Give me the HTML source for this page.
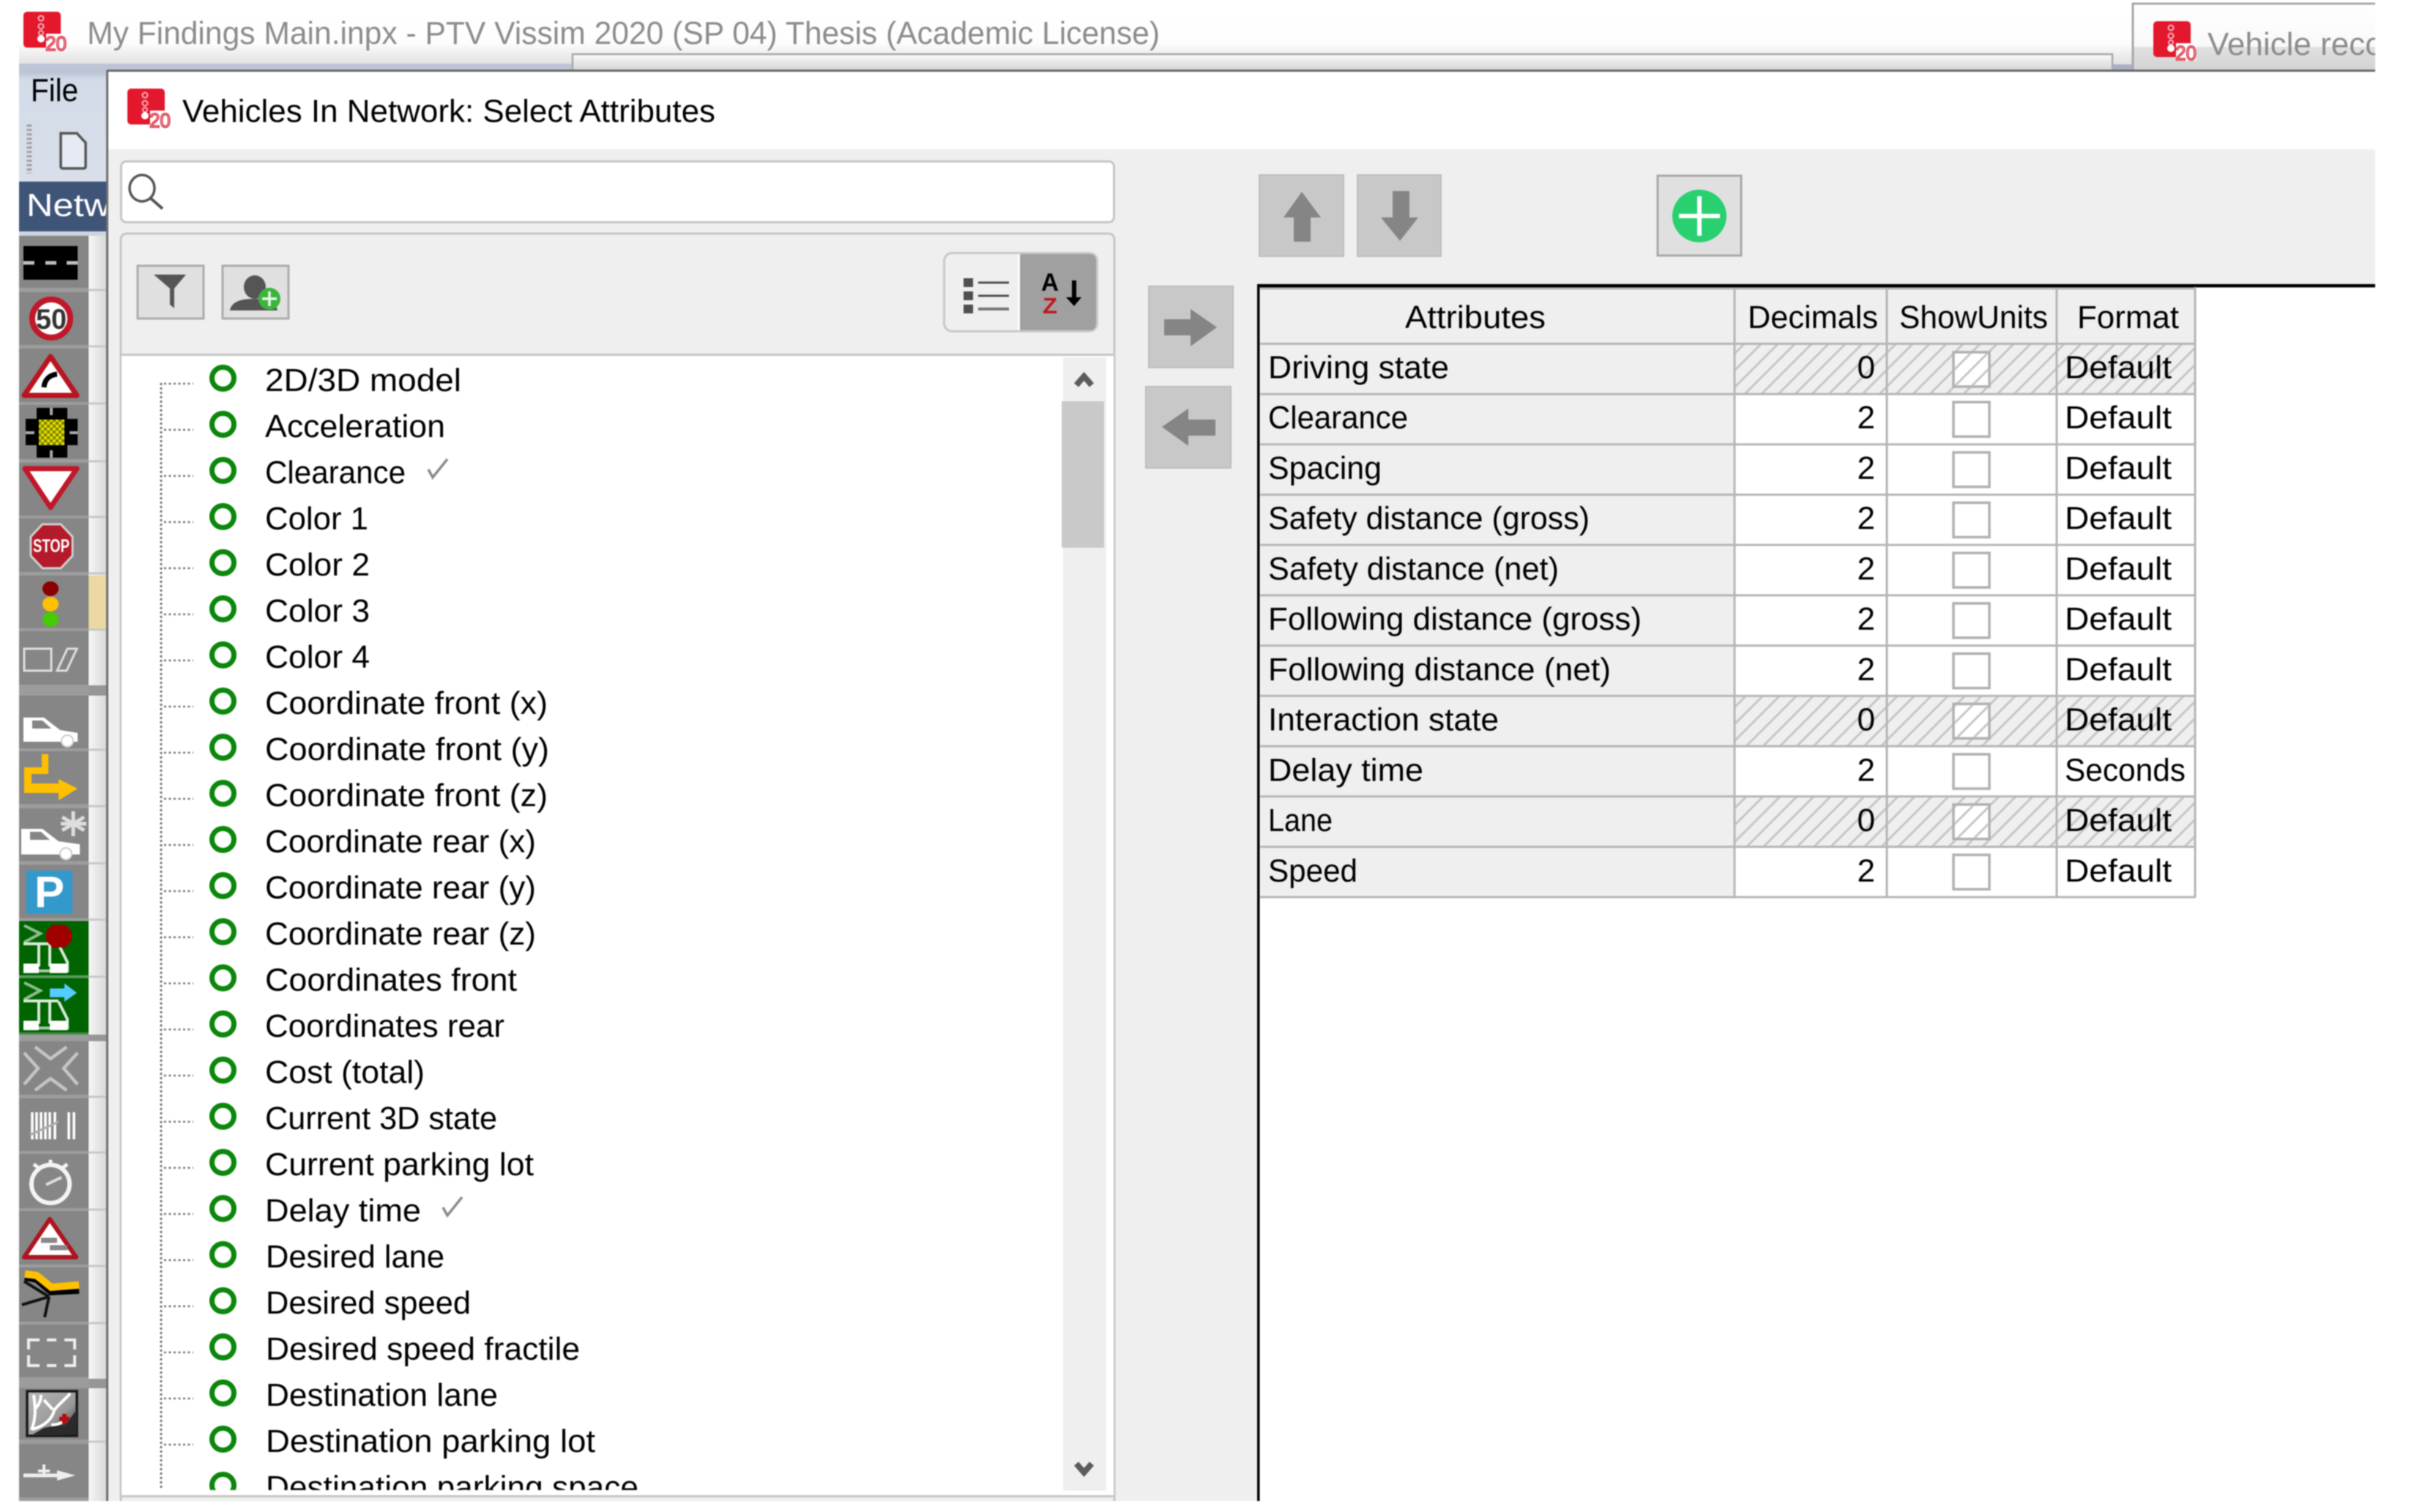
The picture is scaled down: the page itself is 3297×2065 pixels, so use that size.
<!DOCTYPE html>
<html><head><meta charset="utf-8"><title>Vehicles In Network: Select Attributes</title>
<style>
html,body{margin:0;padding:0;background:#fff;width:3297px;height:2065px;overflow:hidden}
svg{display:block;filter:blur(.7px)}
text{font-family:"Liberation Sans",sans-serif;font-size:44px;fill:#000}
.g{fill:#8c8c8c}
</style></head><body>
<svg xmlns="http://www.w3.org/2000/svg" width="3297" height="2065" viewBox="0 0 3297 2065">
<defs>
<linearGradient id="tb" x1="0" y1="0" x2="0" y2="1"><stop offset="0" stop-color="#fff"/><stop offset=".6" stop-color="#fdfdfd"/><stop offset="1" stop-color="#d8d8d8"/></linearGradient>
<linearGradient id="tab" x1="0" y1="0" x2="0" y2="1"><stop offset="0" stop-color="#fbfbfb"/><stop offset="1" stop-color="#d2d2d2"/></linearGradient>
<linearGradient id="col" x1="0" y1="0" x2="1" y2="0"><stop offset="0" stop-color="#f6f6f6"/><stop offset="1" stop-color="#d8d8d8"/></linearGradient>
<linearGradient id="menu" x1="0" y1="0" x2="0" y2="1"><stop offset="0" stop-color="#b9c1d3"/><stop offset=".08" stop-color="#d3dbe8"/><stop offset="1" stop-color="#d8dfea"/></linearGradient>
<linearGradient id="map" x1="0" y1="0" x2="1" y2="1"><stop offset="0" stop-color="#b8b8b8"/><stop offset=".6" stop-color="#999"/><stop offset="1" stop-color="#2a2a2a"/></linearGradient>
<pattern id="h" patternUnits="userSpaceOnUse" width="23" height="23"><path d="M-5 5L5-5M0 23L23 0M18 28L28 18" stroke="#c6c6c6" stroke-width="3" fill="none"/></pattern>
<pattern id="chk" patternUnits="userSpaceOnUse" width="8" height="8"><rect width="8" height="8" fill="#7f7f00"/><rect width="4" height="4" fill="#e0e000"/><rect x="4" y="4" width="4" height="4" fill="#e0e000"/></pattern>
<clipPath id="listclip"><rect x="166" y="485" width="1286" height="1550"/></clipPath>
<clipPath id="netclip"><rect x="26" y="248" width="120" height="68"/></clipPath>
<clipPath id="tabclip"><rect x="2912" y="0" width="332" height="97"/></clipPath>
</defs>
<rect width="3297" height="2065" fill="#fff"/>

<!-- top title bar -->
<rect x="26" y="0" width="3218" height="97" fill="url(#tb)"/>
<rect x="26" y="87" width="760" height="10" fill="#bcc4d6"/>
<rect x="782" y="74" width="2103" height="23" fill="url(#tab)" stroke="#a8a8a8" stroke-width="2.5"/>
<rect x="146" y="95" width="2740" height="3" fill="#6a6a6a"/>
<rect x="2885" y="88" width="27" height="9" fill="#a8b0c4"/>
<rect x="2912" y="4" width="332" height="92" fill="url(#tab)"/>
<rect x="2912" y="4" width="332" height="60" fill="#fff" opacity=".8"/>
<path d="M2913 97V5H3244" fill="none" stroke="#a8a8a8" stroke-width="3"/>
<rect x="2912" y="95" width="332" height="3" fill="#9a9a9a"/>

<!-- logo title -->
<g>
<rect x="32" y="16" width="51" height="49" rx="5" fill="#e3182d"/>
<circle cx="56" cy="25" r="3.5" fill="none" stroke="#f5b0b8" stroke-width="2"/><circle cx="56" cy="36" r="3.5" fill="none" stroke="#f5b0b8" stroke-width="2"/><circle cx="56" cy="45" r="3" fill="none" stroke="#f5b0b8" stroke-width="2"/><circle cx="56" cy="53" r="5" fill="#fff"/>
<rect x="63" y="46" width="28" height="24" fill="#fff"/>
<text x="62" y="69" textLength="29" lengthAdjust="spacingAndGlyphs" style="font-size:28px;fill:#f6d0d4;stroke:#d83040;stroke-width:1.5px">20</text>
</g>
<text x="119" y="60" textLength="1465" lengthAdjust="spacingAndGlyphs" class="g">My Findings Main.inpx - PTV Vissim 2020 (SP 04) Thesis (Academic License)</text>
<g transform="translate(2909,13)">
<rect x="32" y="16" width="51" height="49" rx="5" fill="#e3182d"/>
<circle cx="56" cy="25" r="3.5" fill="none" stroke="#f5b0b8" stroke-width="2"/><circle cx="56" cy="36" r="3.5" fill="none" stroke="#f5b0b8" stroke-width="2"/><circle cx="56" cy="45" r="3" fill="none" stroke="#f5b0b8" stroke-width="2"/><circle cx="56" cy="53" r="5" fill="#fff"/>
<rect x="63" y="46" width="28" height="24" fill="#fff"/>
<text x="62" y="69" textLength="29" lengthAdjust="spacingAndGlyphs" style="font-size:28px;fill:#f6d0d4;stroke:#d83040;stroke-width:1.5px">20</text>
</g>
<g clip-path="url(#tabclip)"><text x="3015" y="75" class="g">Vehicle records</text></g>

<!-- left app strip -->
<rect x="26" y="97" width="120" height="151" fill="url(#menu)"/>
<text x="42" y="138" textLength="65" lengthAdjust="spacingAndGlyphs">File</text>
<path d="M40 170V237" stroke="#a0a0a0" stroke-width="7" stroke-dasharray="3 3"/>
<path d="M83 182h22l12 13v32q0 3-3 3H86q-3 0-3-3z" fill="#e6ebf3" stroke="#555" stroke-width="3.5"/>
<rect x="26" y="248" width="120" height="68" fill="#3f5578"/>
<g clip-path="url(#netclip)"><text x="36" y="295" textLength="185" lengthAdjust="spacingAndGlyphs" style="fill:#fff">Network</text></g>
<rect x="26" y="316" width="120" height="6" fill="#cdd4e2"/>

<rect x="26" y="322" width="95" height="1728" fill="#9c9c9c"/>
<rect x="121" y="322" width="25" height="1728" fill="url(#col)"/>
<rect x="145" y="96" width="3" height="1954" fill="#6f6f6f"/>
<rect x="121" y="786" width="24" height="73" fill="#ecd8a2"/>
<path d="M121 396H145M121 473H145M121 551H145M121 630H145M121 706H145M121 783H145M121 860H145M121 1024H145M121 1101H145M121 1179H145M121 1256H145M121 1334H145M121 1498H145M121 1574H145M121 1652H145M121 1729H145M121 1807H145M121 1969H145" stroke="#c8c8c8" stroke-width="3"/>
<path d="M121 936H145V950H121zM121 1413H145V1422H121zM121 1883H145V1896H121z" fill="#969696"/>
<g fill="#868686">
<rect x="26" y="322" width="95" height="71"/><rect x="26" y="399" width="95" height="72"/><rect x="26" y="476" width="95" height="73"/><rect x="26" y="553" width="95" height="74"/><rect x="26" y="632" width="95" height="72"/><rect x="26" y="708" width="95" height="73"/><rect x="26" y="786" width="95" height="72"/><rect x="26" y="862" width="95" height="73"/><rect x="26" y="950" width="95" height="72"/><rect x="26" y="1026" width="95" height="72"/><rect x="26" y="1104" width="95" height="72"/><rect x="26" y="1181" width="95" height="73"/><rect x="26" y="1422" width="95" height="73"/><rect x="26" y="1500" width="95" height="72"/><rect x="26" y="1576" width="95" height="74"/><rect x="26" y="1654" width="95" height="73"/><rect x="26" y="1731" width="95" height="74"/><rect x="26" y="1809" width="95" height="72"/><rect x="26" y="1896" width="95" height="70"/><rect x="26" y="1972" width="95" height="73"/>
</g>
<rect x="26" y="1258" width="95" height="74" fill="#006400"/><rect x="26" y="1336" width="95" height="74" fill="#006400"/>
<rect x="26" y="1332" width="95" height="4" fill="#5a9a5a"/><rect x="26" y="1410" width="95" height="3" fill="#4a8a4a"/>

<!-- road -->
<rect x="32" y="336" width="74" height="46" fill="#000"/>
<path d="M32 359H47M62 359H77M91 359H106" stroke="#bdbdbd" stroke-width="5"/>
<!-- 50 -->
<circle cx="70" cy="435" r="26" fill="#fff" stroke="#c0182a" stroke-width="8"/>
<text x="70" y="449" text-anchor="middle" textLength="42" lengthAdjust="spacingAndGlyphs" style="font-size:39px;font-weight:bold;fill:#333">50</text>
<!-- curve -->
<path d="M69 487L105 540H33z" fill="#fff" stroke="#b81520" stroke-width="7" stroke-linejoin="round"/>
<path d="M60 529C61 518 68 512 78 511" fill="none" stroke="#000" stroke-width="7"/>
<!-- 4 -->
<path d="M50 557H92V572H106V608H92V625H50V608H35V572H50z" fill="#000"/>
<rect x="53" y="573" width="35" height="35" fill="url(#chk)"/>
<path d="M70 557V567M70 615V625M35 591H47M95 591H106" stroke="#aaa" stroke-width="4"/>
<!-- yield -->
<path d="M34 640H105L69 693z" fill="#fff" stroke="#c0182a" stroke-width="7" stroke-linejoin="round"/>
<!-- stop -->
<path d="M58 716H83L99 733V759L83 776H58L42 759V733z" fill="#b51a2a" stroke="#cfcfcf" stroke-width="3"/>
<text x="70" y="754" text-anchor="middle" textLength="50" lengthAdjust="spacingAndGlyphs" style="font-size:25px;font-weight:bold;fill:#fff">STOP</text>
<!-- signal -->
<ellipse cx="69" cy="804" rx="11" ry="10" fill="#8b0000"/><ellipse cx="69" cy="825" rx="11" ry="10" fill="#ffc000"/><ellipse cx="69" cy="846" rx="11" ry="10" fill="#44cc00"/>
<!-- rect/para -->
<rect x="33" y="886" width="37" height="30" fill="none" stroke="#ddd" stroke-width="3"/>
<path d="M92 886H105L91 916H78z" fill="none" stroke="#ddd" stroke-width="3"/>
<!-- car -->
<path d="M32 980H60L82 997L106 1001V1013H32z" fill="#fff"/>
<path d="M44 984H58L70 995H44z" fill="#868686"/>
<circle cx="92" cy="1012" r="8" fill="#fff" stroke="#ccc" stroke-width="2"/>
<!-- yellow route -->
<path d="M57 1030H66V1057H43V1070H80V1064L106 1077L80 1093V1083H33V1048H57z" fill="#ffc000"/>
<!-- car star -->
<path d="M29 1132H58L80 1149L109 1153V1167H29z" fill="#fff"/>
<path d="M41 1136H56L68 1147H41z" fill="#868686"/>
<circle cx="90" cy="1166" r="8" fill="#fff" stroke="#ccc" stroke-width="2"/>
<path d="M100 1108V1142M85 1116L115 1134M115 1116L85 1134M83 1125H118" stroke="#ddd" stroke-width="5"/>
<!-- P -->
<rect x="36" y="1189" width="63" height="59" fill="#3399cc"/>
<text x="47" y="1239" textLength="41" lengthAdjust="spacingAndGlyphs" style="font-size:60px;font-weight:bold;fill:#fff">P</text>
<!-- green tiles -->
<g>
<path d="M33 1264L55 1275L33 1287" fill="none" stroke="#8fbc8f" stroke-width="4"/>
<path d="M32 1289H80M53 1290V1320M68 1290V1320M80 1290L92 1314V1328" fill="none" stroke="#d8e8d8" stroke-width="4"/>
<rect x="32" y="1316" width="21" height="13" fill="#fff"/><rect x="68" y="1316" width="24" height="13" fill="#fff"/><rect x="53" y="1324" width="15" height="4" fill="#a8c8a8"/>
</g>
<path d="M72 1263H89L98 1272V1285L89 1294H72L63 1285V1272z" fill="#a00000"/>
<g>
<path d="M33 1342L55 1353L33 1365" fill="none" stroke="#8fbc8f" stroke-width="4"/>
<path d="M32 1367H80M53 1368V1398M68 1368V1398M80 1368L92 1392V1406" fill="none" stroke="#d8e8d8" stroke-width="4"/>
<rect x="32" y="1394" width="21" height="13" fill="#fff"/><rect x="68" y="1394" width="24" height="13" fill="#fff"/><rect x="53" y="1402" width="15" height="4" fill="#a8c8a8"/>
</g>
<path d="M68 1350H88V1343L105 1356L88 1368V1362H68z" fill="#55ccff"/>
<!-- X -->
<path d="M48 1430L69 1446L91 1430M48 1489L69 1473L91 1489M33 1438L52 1459L33 1481M106 1438L87 1459L106 1481" fill="none" stroke="#c4c4c4" stroke-width="4.500"/>
<!-- bars -->
<path d="M44 1519V1556M50 1519V1556M56 1519V1556M62 1519V1556M68 1519V1556M75 1519V1556M94 1519V1556M101 1519V1556" stroke="#fff" stroke-width="3.500"/>
<path d="M41 1550L80 1532" stroke="#aaa" stroke-width="3"/>
<!-- stopwatch -->
<circle cx="69" cy="1617" r="26" fill="none" stroke="#f4f4f4" stroke-width="6"/>
<path d="M69 1584V1592M46 1590L54 1596M92 1590L84 1596" stroke="#f4f4f4" stroke-width="5"/>
<path d="M63 1618L84 1608" stroke="#ddd" stroke-width="4"/>
<!-- triangle 2 -->
<path d="M68 1665L104 1717H33z" fill="#fff" stroke="#ad1420" stroke-width="6" stroke-linejoin="round"/>
<path d="M56 1694H78M68 1704H92" stroke="#888" stroke-width="7"/>
<!-- junction -->
<path d="M34 1744L50 1747L70 1764L108 1762" fill="none" stroke="#000" stroke-width="10"/>
<path d="M34 1740L50 1742L70 1758L108 1755" fill="none" stroke="#ffc000" stroke-width="10"/>
<path d="M30 1782L67 1771M67 1771L61 1799M33 1750L67 1771" fill="none" stroke="#111" stroke-width="4"/>
<!-- dashed rect -->
<path d="M54 1830H39V1843M39 1851V1865H54M64 1830H77M64 1865H77M88 1830H102V1843M102 1851V1865H88" fill="none" stroke="#eee" stroke-width="4"/>
<!-- map -->
<rect x="37" y="1900" width="68" height="61" fill="url(#map)" stroke="#1a1a1a" stroke-width="3.500"/>
<path d="M105 1902V1925L90 1945L60 1950L45 1959H105z" fill="#2a2a2a"/>
<path d="M43 1953C50 1935 48 1920 46 1905M44 1952C62 1948 72 1936 74 1926C80 1918 88 1912 96 1903M60 1912L72 1925M70 1946C78 1946 84 1944 90 1938M56 1905C56 1914 52 1920 48 1924" fill="none" stroke="#fff" stroke-width="4"/>
<path d="M88 1931V1945M81 1938H95" stroke="#b01010" stroke-width="6"/>
<!-- arrow -->
<path d="M32 2015H80" stroke="#eee" stroke-width="5"/><path d="M78 2008L103 2015L78 2022z" fill="#eee"/><path d="M60 2000V2015M52 2009H68" stroke="#eee" stroke-width="4"/>

<!-- dialog -->
<rect x="148" y="98" width="3096" height="106" fill="#fff"/>
<rect x="146" y="95" width="3098" height="3" fill="#6a6a6a"/>
<rect x="148" y="204" width="3096" height="1846" fill="#efefef"/>
<g transform="translate(142,105)">
<rect x="32" y="16" width="51" height="49" rx="5" fill="#e3182d"/>
<circle cx="56" cy="25" r="3.500" fill="none" stroke="#f5b0b8" stroke-width="2"/><circle cx="56" cy="36" r="3.500" fill="none" stroke="#f5b0b8" stroke-width="2"/><circle cx="56" cy="45" r="3" fill="none" stroke="#f5b0b8" stroke-width="2"/><circle cx="56" cy="53" r="5" fill="#fff"/>
<rect x="63" y="46" width="28" height="24" fill="#fff"/>
<text x="62" y="69" textLength="29" lengthAdjust="spacingAndGlyphs" style="font-size:28px;fill:#f6d0d4;stroke:#d83040;stroke-width:1.5px">20</text>
</g>
<text x="249" y="166.500" textLength="728" lengthAdjust="spacingAndGlyphs">Vehicles In Network: Select Attributes</text>

<!-- search -->
<rect x="165.500" y="220.500" width="1356" height="83" rx="7" fill="#fff" stroke="#c6c6c6" stroke-width="3"/>
<ellipse cx="194" cy="257" rx="17" ry="18" fill="none" stroke="#555" stroke-width="3.500"/>
<path d="M206 271L222 285" stroke="#555" stroke-width="4"/>

<!-- list panel -->
<path d="M165 2050V328q0-9 9-9H1513q9 0 9 9V2050" fill="#efefef" stroke="#c6c6c6" stroke-width="3"/>
<rect x="166" y="483" width="1355" height="3" fill="#c6c6c6"/>
<rect x="166" y="486" width="1355" height="1556" fill="#fff"/>
<rect x="164" y="2042" width="1358" height="3" fill="#c6c6c6"/>

<!-- tool buttons -->
<rect x="188" y="363" width="90" height="72" fill="#e0e0e0" stroke="#ababab" stroke-width="3"/>
<path d="M210 375H254L238 394V421L232 416V394z" fill="#555"/>
<rect x="304" y="363" width="90" height="72" fill="#e0e0e0" stroke="#ababab" stroke-width="3"/>
<ellipse cx="348" cy="392" rx="15" ry="16" fill="#555"/>
<path d="M314 424C316 412 329 408 348 408C367 408 377 414 379 424z" fill="#555"/>
<circle cx="368" cy="408" r="15" fill="#3cb53c"/>
<path d="M368 398V418M358 408H378" stroke="#e8f8e8" stroke-width="3.500"/>

<!-- view buttons -->
<rect x="1289.500" y="345.500" width="209" height="107" rx="11" fill="#efefef" stroke="#c8c8c8" stroke-width="3"/>
<path d="M1393 347H1488q9 0 9 9V442q0 9-9 9H1393z" fill="#a0a0a0"/>
<rect x="1390" y="347" width="3" height="104" fill="#fff"/>
<g fill="#4f4f4f"><rect x="1316" y="380" width="13" height="12"/><rect x="1316" y="398" width="13" height="12"/><rect x="1316" y="416" width="13" height="12"/></g>
<path d="M1336 386H1378M1336 404H1378" stroke="#4f4f4f" stroke-width="3"/><path d="M1336 422H1378" stroke="#777" stroke-width="4"/>
<text x="1422" y="397" textLength="24" lengthAdjust="spacingAndGlyphs" style="font-size:34px;font-weight:bold;fill:#000">A</text>
<text x="1424" y="428" textLength="20" lengthAdjust="spacingAndGlyphs" style="font-size:31px;font-weight:bold;fill:#c01822">Z</text>
<path d="M1464 383H1470V406H1477L1467 418L1456 406H1464z" fill="#000"/>

<!-- scrollbar -->
<rect x="1452" y="488" width="59" height="1548" fill="#efefef"/>
<rect x="1450" y="548" width="58" height="200" fill="#c9c9c9"/>
<path d="M1470 526L1480.500 514L1491 526" fill="none" stroke="#5c5c5c" stroke-width="8"/>
<path d="M1470 1999L1480.500 2011L1491 1999" fill="none" stroke="#5c5c5c" stroke-width="8"/>

<!-- tree -->
<g clip-path="url(#listclip)">
<path d="M220 523V2032" stroke="#777" stroke-width="3" stroke-dasharray="3 3"/>
<path d="M224 524H264M224 587H264M224 650H264M224 713H264M224 776H264M224 839H264M224 902H264M224 965H264M224 1028H264M224 1091H264M224 1154H264M224 1217H264M224 1280H264M224 1343H264M224 1406H264M224 1469H264M224 1532H264M224 1595H264M224 1658H264M224 1721H264M224 1784H264M224 1847H264M224 1910H264M224 1973H264" stroke="#777" stroke-width="2.500" stroke-dasharray="3 3.500"/>
<g fill="none" stroke="#0b870b" stroke-width="7">
<ellipse cx="304.500" cy="516.500" rx="15" ry="15"/><ellipse cx="304.500" cy="579.500" rx="15" ry="15"/><ellipse cx="304.500" cy="642.500" rx="15" ry="15"/><ellipse cx="304.500" cy="705.500" rx="15" ry="15"/><ellipse cx="304.500" cy="768.500" rx="15" ry="15"/><ellipse cx="304.500" cy="831.500" rx="15" ry="15"/><ellipse cx="304.500" cy="894.500" rx="15" ry="15"/><ellipse cx="304.500" cy="957.500" rx="15" ry="15"/><ellipse cx="304.500" cy="1020.500" rx="15" ry="15"/><ellipse cx="304.500" cy="1083.500" rx="15" ry="15"/><ellipse cx="304.500" cy="1146.500" rx="15" ry="15"/><ellipse cx="304.500" cy="1209.500" rx="15" ry="15"/><ellipse cx="304.500" cy="1272.500" rx="15" ry="15"/><ellipse cx="304.500" cy="1335.500" rx="15" ry="15"/><ellipse cx="304.500" cy="1398.500" rx="15" ry="15"/><ellipse cx="304.500" cy="1461.500" rx="15" ry="15"/><ellipse cx="304.500" cy="1524.500" rx="15" ry="15"/><ellipse cx="304.500" cy="1587.500" rx="15" ry="15"/><ellipse cx="304.500" cy="1650.500" rx="15" ry="15"/><ellipse cx="304.500" cy="1713.500" rx="15" ry="15"/><ellipse cx="304.500" cy="1776.500" rx="15" ry="15"/><ellipse cx="304.500" cy="1839.500" rx="15" ry="15"/><ellipse cx="304.500" cy="1902.500" rx="15" ry="15"/><ellipse cx="304.500" cy="1965.500" rx="15" ry="15"/><ellipse cx="304.500" cy="2028.500" rx="15" ry="15"/>
</g>
<text x="362" y="534" textLength="268" lengthAdjust="spacingAndGlyphs">2D/3D model</text>
<text x="362" y="597" textLength="246" lengthAdjust="spacingAndGlyphs">Acceleration</text>
<text x="362" y="660" textLength="192" lengthAdjust="spacingAndGlyphs">Clearance</text>
<text x="362" y="723" textLength="141" lengthAdjust="spacingAndGlyphs">Color 1</text>
<text x="362" y="786" textLength="143" lengthAdjust="spacingAndGlyphs">Color 2</text>
<text x="362" y="849" textLength="143" lengthAdjust="spacingAndGlyphs">Color 3</text>
<text x="362" y="912" textLength="143" lengthAdjust="spacingAndGlyphs">Color 4</text>
<text x="362" y="975" textLength="386" lengthAdjust="spacingAndGlyphs">Coordinate front (x)</text>
<text x="362" y="1038" textLength="388" lengthAdjust="spacingAndGlyphs">Coordinate front (y)</text>
<text x="362" y="1101" textLength="386" lengthAdjust="spacingAndGlyphs">Coordinate front (z)</text>
<text x="362" y="1164" textLength="370" lengthAdjust="spacingAndGlyphs">Coordinate rear (x)</text>
<text x="362" y="1227" textLength="370" lengthAdjust="spacingAndGlyphs">Coordinate rear (y)</text>
<text x="362" y="1290" textLength="370" lengthAdjust="spacingAndGlyphs">Coordinate rear (z)</text>
<text x="362" y="1353" textLength="344" lengthAdjust="spacingAndGlyphs">Coordinates front</text>
<text x="362" y="1416" textLength="327" lengthAdjust="spacingAndGlyphs">Coordinates rear</text>
<text x="362" y="1479" textLength="218" lengthAdjust="spacingAndGlyphs">Cost (total)</text>
<text x="362" y="1542" textLength="317" lengthAdjust="spacingAndGlyphs">Current 3D state</text>
<text x="362" y="1605" textLength="367" lengthAdjust="spacingAndGlyphs">Current parking lot</text>
<text x="362" y="1668" textLength="213" lengthAdjust="spacingAndGlyphs">Delay time</text>
<text x="363" y="1731" textLength="244" lengthAdjust="spacingAndGlyphs">Desired lane</text>
<text x="363" y="1794" textLength="280" lengthAdjust="spacingAndGlyphs">Desired speed</text>
<text x="363" y="1857" textLength="429" lengthAdjust="spacingAndGlyphs">Desired speed fractile</text>
<text x="363" y="1920" textLength="317" lengthAdjust="spacingAndGlyphs">Destination lane</text>
<text x="363" y="1983" textLength="450" lengthAdjust="spacingAndGlyphs">Destination parking lot</text>
<text x="363" y="2046" textLength="509" lengthAdjust="spacingAndGlyphs">Destination parking space</text>
</g>
<path d="M585 641L591 652L611 627" fill="none" stroke="#8b8b8b" stroke-width="3.500"/>
<path d="M605 1649L611 1660L631 1635" fill="none" stroke="#8b8b8b" stroke-width="3.500"/>

<!-- action buttons -->
<rect x="1720" y="239" width="115" height="111" fill="#c8c8c8" stroke="#bdbdbd" stroke-width="2"/>
<path d="M1778 262L1804 297H1790V330H1767V297H1753z" fill="#858585"/>
<rect x="1854" y="239" width="114" height="111" fill="#c8c8c8" stroke="#bdbdbd" stroke-width="2"/>
<path d="M1902 261H1925V297H1937L1912 329L1886 297H1902z" fill="#858585"/>
<rect x="2264" y="240" width="114" height="109" fill="#e0e0e0" stroke="#a8a8a8" stroke-width="3"/>
<ellipse cx="2321" cy="295" rx="37" ry="36" fill="#28d070"/>
<path d="M2293 295H2349M2321 268V322" stroke="#fff" stroke-width="6"/>
<rect x="1569" y="391" width="115" height="111" fill="#c8c8c8" stroke="#bdbdbd" stroke-width="2"/>
<path d="M1590 436H1626V422L1662 447L1626 473V458H1590z" fill="#858585"/>
<rect x="1565" y="528" width="116" height="111" fill="#c8c8c8" stroke="#bdbdbd" stroke-width="2"/>
<path d="M1587 583L1623 558V573H1660V595H1623V609z" fill="#858585"/>

<!-- table panel -->
<rect x="1719" y="390" width="1525" height="1660" fill="#fff"/>
<rect x="1717" y="388" width="1527" height="4.500" fill="#000"/>
<rect x="1717" y="388" width="3.500" height="1662" fill="#000"/>
<rect x="1721" y="393" width="1277" height="76" fill="#efefef"/>
<rect x="1721" y="469" width="648" height="757" fill="#efefef"/>

<!-- hatched cells -->
<rect x="2369" y="470" width="629" height="68" fill="#efefef"/><rect x="2369" y="470" width="629" height="68" fill="url(#h)"/>
<rect x="2369" y="950.400" width="629" height="69" fill="#efefef"/><rect x="2369" y="950.400" width="629" height="69" fill="url(#h)"/>
<rect x="2369" y="1087.800" width="629" height="69" fill="#efefef"/><rect x="2369" y="1087.800" width="629" height="69" fill="url(#h)"/>

<!-- grid -->
<path d="M1721 469.500H2998M1721 538.200H2998M1721 606.900H2998M1721 675.600H2998M1721 744.300H2998M1721 813H2998M1721 881.700H2998M1721 950.400H2998M1721 1019.100H2998M1721 1087.800H2998M1721 1156.500H2998M1721 1225.200H2998M1721 394H2998" stroke="#b6b6b6" stroke-width="3"/>
<path d="M2369 395V1226M2577 395V1226M2809 395V1226M2998 392V1226" stroke="#b6b6b6" stroke-width="3"/>

<!-- checkboxes -->
<g fill="#fff" stroke="#b0b0b0" stroke-width="3.500">
<rect x="2668" y="481" width="49" height="47"/><rect x="2668" y="549.200" width="49" height="47"/><rect x="2668" y="617.900" width="49" height="47"/><rect x="2668" y="686.600" width="49" height="47"/><rect x="2668" y="755.300" width="49" height="47"/><rect x="2668" y="824" width="49" height="47"/><rect x="2668" y="892.700" width="49" height="47"/><rect x="2668" y="961.400" width="49" height="47"/><rect x="2668" y="1030.100" width="49" height="47"/><rect x="2668" y="1098.800" width="49" height="47"/><rect x="2668" y="1167.500" width="49" height="47"/>
</g>
<rect x="2670" y="483" width="45" height="43" fill="url(#h)"/><rect x="2670" y="963.400" width="45" height="43" fill="url(#h)"/><rect x="2670" y="1100.800" width="45" height="43" fill="url(#h)"/>

<!-- table text -->
<text x="1919" y="448" textLength="192" lengthAdjust="spacingAndGlyphs">Attributes</text>
<text x="2387" y="448" textLength="178" lengthAdjust="spacingAndGlyphs">Decimals</text>
<text x="2594" y="448" textLength="203" lengthAdjust="spacingAndGlyphs">ShowUnits</text>
<text x="2837" y="448" textLength="139" lengthAdjust="spacingAndGlyphs">Format</text>

<text x="1732" y="516.500" textLength="247" lengthAdjust="spacingAndGlyphs">Driving state</text>
<text x="1732" y="585.200" textLength="191" lengthAdjust="spacingAndGlyphs">Clearance</text>
<text x="1732" y="654" textLength="155" lengthAdjust="spacingAndGlyphs">Spacing</text>
<text x="1732" y="722.700" textLength="439" lengthAdjust="spacingAndGlyphs">Safety distance (gross)</text>
<text x="1732" y="791.500" textLength="397" lengthAdjust="spacingAndGlyphs">Safety distance (net)</text>
<text x="1732" y="860.200" textLength="510" lengthAdjust="spacingAndGlyphs">Following distance (gross)</text>
<text x="1732" y="929" textLength="468" lengthAdjust="spacingAndGlyphs">Following distance (net)</text>
<text x="1732" y="997.700" textLength="315" lengthAdjust="spacingAndGlyphs">Interaction state</text>
<text x="1732" y="1066.500" textLength="212" lengthAdjust="spacingAndGlyphs">Delay time</text>
<text x="1732" y="1135.200" textLength="88" lengthAdjust="spacingAndGlyphs">Lane</text>
<text x="1732" y="1204" textLength="122" lengthAdjust="spacingAndGlyphs">Speed</text>

<g text-anchor="end">
<text x="2561" y="516.500">0</text><text x="2561" y="585.200">2</text><text x="2561" y="654">2</text><text x="2561" y="722.700">2</text><text x="2561" y="791.500">2</text><text x="2561" y="860.200">2</text><text x="2561" y="929">2</text><text x="2561" y="997.700">0</text><text x="2561" y="1066.500">2</text><text x="2561" y="1135.200">0</text><text x="2561" y="1204">2</text>
</g>
<text x="2820" y="516.500" textLength="146" lengthAdjust="spacingAndGlyphs">Default</text>
<text x="2820" y="585.200" textLength="146" lengthAdjust="spacingAndGlyphs">Default</text>
<text x="2820" y="654" textLength="146" lengthAdjust="spacingAndGlyphs">Default</text>
<text x="2820" y="722.700" textLength="146" lengthAdjust="spacingAndGlyphs">Default</text>
<text x="2820" y="791.500" textLength="146" lengthAdjust="spacingAndGlyphs">Default</text>
<text x="2820" y="860.200" textLength="146" lengthAdjust="spacingAndGlyphs">Default</text>
<text x="2820" y="929" textLength="146" lengthAdjust="spacingAndGlyphs">Default</text>
<text x="2820" y="997.700" textLength="146" lengthAdjust="spacingAndGlyphs">Default</text>
<text x="2820" y="1066.500" textLength="165" lengthAdjust="spacingAndGlyphs">Seconds</text>
<text x="2820" y="1135.200" textLength="146" lengthAdjust="spacingAndGlyphs">Default</text>
<text x="2820" y="1204" textLength="146" lengthAdjust="spacingAndGlyphs">Default</text>
</svg>
</body></html>
